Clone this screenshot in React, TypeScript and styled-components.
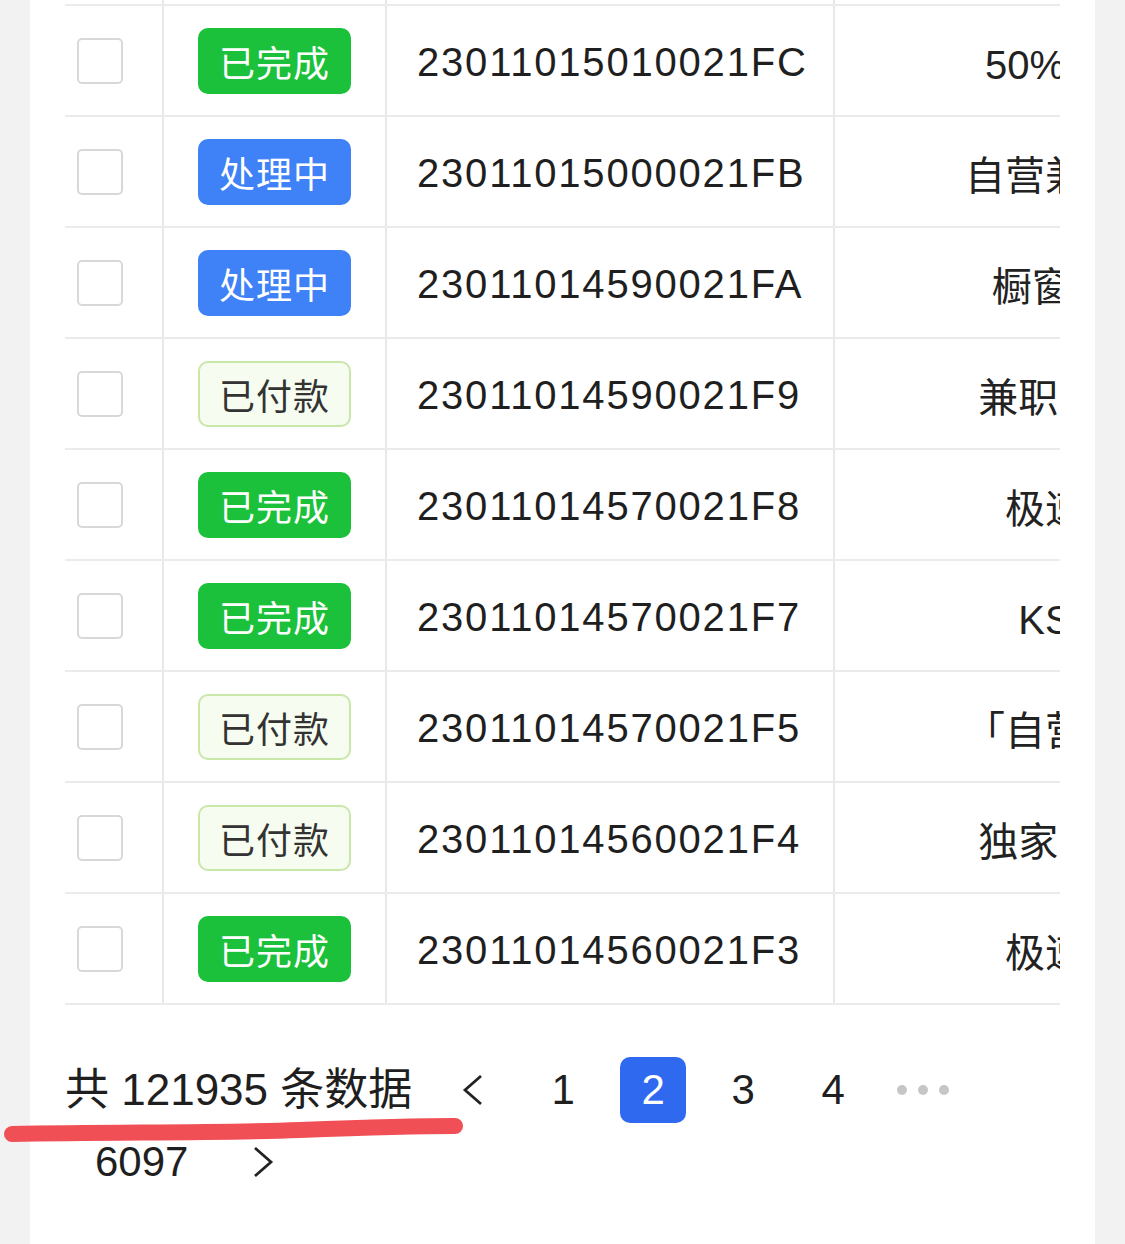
import React from 'react'
import styled, { createGlobalStyle } from 'styled-components'

const GlobalStyle = createGlobalStyle`
  html, body {
    margin: 0;
    padding: 0;
    background: #f2f2f3;
  }
  body {
    font-family: "Liberation Sans", "Noto Sans CJK SC", sans-serif;
    color: #1f1f1f;
  }
`

const Page = styled.div`
  position: relative;
  min-height: 100vh;
  padding: 0 30px;
  box-sizing: border-box;
`
const Card = styled.main`
  background: #fff;
  min-height: 100vh;
  padding: 0 35px 40px;
  box-sizing: border-box;
`
const TableClip = styled.div`
  overflow: hidden;
`
const Row = styled.div<{ stub?: boolean }>`
  display: grid;
  grid-template-columns: 97px 223px 448px 542px;
  width: 1310px;
  height: ${({ stub }) => (stub ? '6px' : '111px')};
  border-bottom: 2px solid #ebebeb;
  box-sizing: border-box;
`
const Cell = styled.div<{ justify?: string; divider?: boolean; pad?: number }>`
  display: flex;
  align-items: center;
  justify-content: ${({ justify }) => justify || 'flex-start'};
  padding-left: ${({ pad }) => pad || 0}px;
  border-left: ${({ divider }) => (divider ? '2px solid #e8e8e8' : 'none')};
  white-space: nowrap;
  box-sizing: border-box;
`
const Checkbox = styled.span`
  width: 46px;
  height: 46px;
  border: 2px solid #d8d8d8;
  border-radius: 5px;
  background: #fff;
  box-sizing: border-box;
`

type Status = 'done' | 'processing' | 'paid'

const badgeColors: Record<Status, { bg: string; border: string; fg: string }> = {
  done: { bg: '#1bc13a', border: '#1bc13a', fg: '#fff' },
  processing: { bg: '#3f81f6', border: '#3f81f6', fg: '#fff' },
  paid: { bg: '#f6fcef', border: '#c9e7a9', fg: '#333' },
}
const badgeLabels: Record<Status, string> = {
  done: '已完成',
  processing: '处理中',
  paid: '已付款',
}

const Badge = styled.span<{ status: Status }>`
  width: 153px;
  height: 66px;
  border-radius: 10px;
  box-sizing: border-box;
  display: flex;
  align-items: center;
  justify-content: center;
  font-family: "Noto Sans CJK SC", sans-serif;
  font-size: 36px;
  letter-spacing: 1px;
  background: ${({ status }) => badgeColors[status].bg};
  border: 2px solid ${({ status }) => badgeColors[status].border};
  color: ${({ status }) => badgeColors[status].fg};
`
const OrderNo = styled.span`
  font-size: 40px;
  letter-spacing: 1.8px;
  color: #1f1f1f;
  padding-top: 3px;
`
const TaskName = styled.span`
  font-size: 40px;
  color: #222;
  padding-top: 2px;
`

const Pager = styled.nav`
  display: flex;
  flex-wrap: wrap;
  align-items: center;
  row-gap: 6px;
  margin-top: 52px;
`
const Total = styled.span`
  font-size: 44px;
  margin-right: 16px;
  line-height: 66px;
`
const PageItem = styled.span<{ active?: boolean }>`
  min-width: 66px;
  height: 66px;
  padding: 0 18px;
  margin: 0 12px;
  box-sizing: border-box;
  display: flex;
  align-items: center;
  justify-content: center;
  font-size: 42px;
  border-radius: 10px;
  background: ${({ active }) => (active ? '#2f69f0' : 'transparent')};
  color: ${({ active }) => (active ? '#fff' : '#1f1f1f')};
`
const Ellipsis = styled.span`
  width: 66px;
  height: 66px;
  margin: 0 12px;
  display: flex;
  align-items: center;
  justify-content: center;
  gap: 11px;
`
const Dot = styled.i`
  width: 10px;
  height: 10px;
  border-radius: 50%;
  background: #c6c6c6;
`
const Annotation = styled.svg`
  position: absolute;
  top: 0;
  left: 0;
  pointer-events: none;
`

const Chevron: React.FC<{ dir: 'left' | 'right' }> = ({ dir }) => (
  <svg width="22" height="32" viewBox="0 0 22 32">
    <polyline
      points={dir === 'left' ? '19,2 3,16 19,30' : '3,2 19,16 3,30'}
      fill="none"
      stroke="#222"
      strokeWidth="2.8"
    />
  </svg>
)

const rows: [Status, string, string][] = [
  ['done', '23011015010021FC', '50%返佣任务'],
  ['processing', '23011015000021FB', '自营兼职推广员'],
  ['processing', '23011014590021FA', '橱窗带货(新)'],
  ['paid', '23011014590021F9', '兼职·推广任务'],
  ['done', '23011014570021F8', '极速版拉新'],
  ['done', '23011014570021F7', 'KS极速版'],
  ['paid', '23011014570021F5', '「自营」推广员'],
  ['paid', '23011014560021F4', '独家·高佣专区'],
  ['done', '23011014560021F3', '极速版拉新'],
]

const App: React.FC = () => (
  <>
    <GlobalStyle />
    <Page>
      <Card>
        <TableClip>
          {/* previous row, scrolled out of view */}
          <Row stub>
            <Cell />
            <Cell divider />
            <Cell divider />
            <Cell divider />
          </Row>
          {rows.map(([status, no, name]) => (
            <Row key={no}>
              <Cell pad={12}>
                <Checkbox />
              </Cell>
              <Cell divider justify="center">
                <Badge status={status}>{badgeLabels[status]}</Badge>
              </Cell>
              <Cell divider pad={30}>
                <OrderNo>{no}</OrderNo>
              </Cell>
              <Cell divider justify="center">
                <TaskName>{name}</TaskName>
              </Cell>
            </Row>
          ))}
        </TableClip>
        <Pager>
          <Total>共 121935 条数据</Total>
          <PageItem><Chevron dir="left" /></PageItem>
          <PageItem>1</PageItem>
          <PageItem active>2</PageItem>
          <PageItem>3</PageItem>
          <PageItem>4</PageItem>
          <Ellipsis><Dot /><Dot /><Dot /></Ellipsis>
          <PageItem>6097</PageItem>
          <PageItem><Chevron dir="right" /></PageItem>
        </Pager>
      </Card>
      <Annotation width="1125" height="1244" viewBox="0 0 1125 1244">
        <path
          d="M12 1134 C 120 1132, 220 1133, 300 1130 S 420 1126, 455 1126"
          fill="none"
          stroke="#f14f56"
          strokeWidth="16"
          strokeLinecap="round"
        />
      </Annotation>
    </Page>
  </>
)

export default App
